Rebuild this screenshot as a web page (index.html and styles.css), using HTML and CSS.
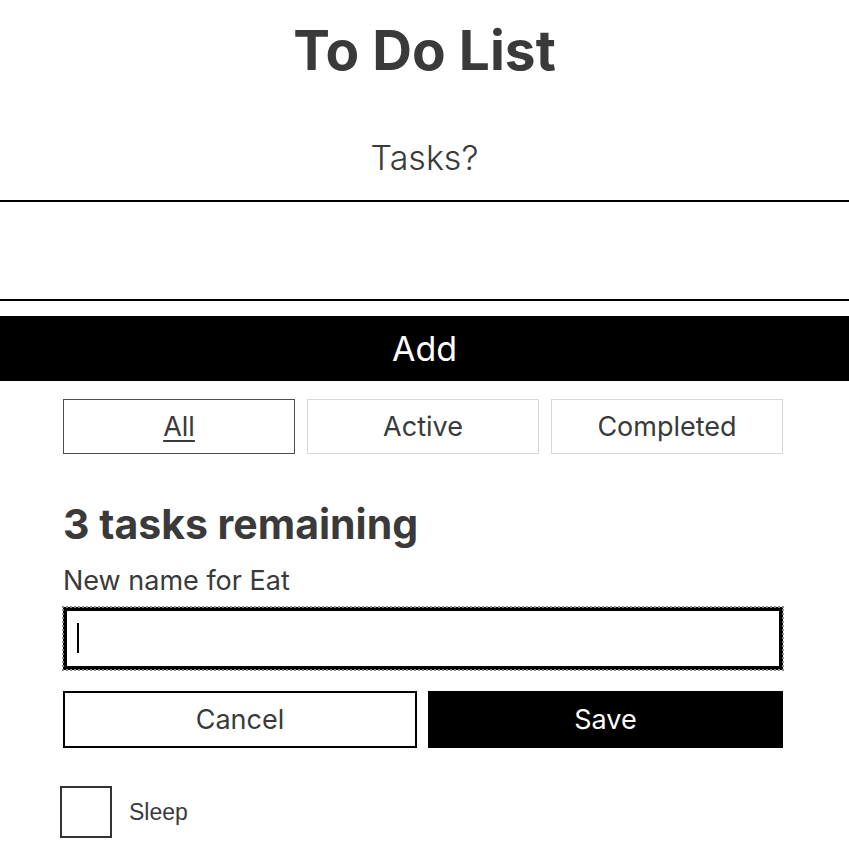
FILE: index.html
```html
<!DOCTYPE html>
<html lang="en">
<head>
<meta charset="utf-8">
<title>To Do List</title>
<link rel="stylesheet" href="styles.css">
</head>
<body>
<div class="todoapp">
  <h1 class="title">To Do List</h1>
  <form class="add-form">
    <label class="add-label" for="new-todo">Tasks?</label>
    <input class="add-input" id="new-todo" type="text">
    <button class="add-btn" type="button">Add</button>
  </form>
  <div class="content">
    <div class="filters">
      <button class="filter filter--active" type="button"><span class="filter-text">All</span></button>
      <button class="filter" type="button">Active</button>
      <button class="filter" type="button">Completed</button>
    </div>
    <h2 class="remaining">3 tasks remaining</h2>
    <form class="edit-form">
      <label class="edit-label" for="edit-eat">New name for Eat</label>
      <div class="edit-input"><span class="caret"></span></div>
      <div class="edit-actions">
        <button class="btn btn--cancel" type="button">Cancel</button>
        <button class="btn btn--save" type="button">Save</button>
      </div>
    </form>
    <ul class="todo-list">
      <li class="todo">
        <span class="checkbox"></span>
        <span class="todo-name">Sleep</span>
      </li>
    </ul>
  </div>
</div>
</body>
</html>
```
FILE: styles.css
```css
html, body {
  margin: 0;
  padding: 0;
  background: #fff;
}
body {
  font-family: Inter, "Liberation Sans", Arial, sans-serif;
  color: #3a3a3a;
}
.todoapp {
  display: flex;
  flex-direction: column;
}
.title {
  margin: 0;
  padding-top: 18px;
  font-size: 55px;
  line-height: 64px;
  font-weight: 700;
  text-align: center;
  color: #3a3a3a;
}
.add-form {
  display: flex;
  flex-direction: column;
}
.add-label {
  display: block;
  margin-top: 55px;
  font-size: 34px;
  font-weight: 300;
  line-height: 42px;
  text-align: center;
  color: #3a3a3a;
}
.add-input {
  display: block;
  box-sizing: border-box;
  width: 100%;
  height: 101px;
  margin: 21px 0 0;
  padding: 0;
  border: none;
  border-top: 2px solid #000;
  border-bottom: 2px solid #000;
  background: #fff;
  outline: none;
}
.add-btn {
  display: block;
  width: 100%;
  height: 65px;
  margin-top: 15px;
  padding: 0;
  border: none;
  background: #000;
  color: #fff;
  font-family: Inter, sans-serif;
  font-size: 34px;
  line-height: 1;
}
.content {
  width: 720px;
  margin: 0 0 0 63px;
  display: flex;
  flex-direction: column;
}
.filters {
  display: grid;
  grid-template-columns: repeat(3, 1fr);
  column-gap: 12px;
  margin-top: 18px;
}
.filter {
  box-sizing: border-box;
  height: 55px;
  padding: 0;
  border: 1px solid #d8d8d8;
  background: #fff;
  color: #3a3a3a;
  font-family: Inter, sans-serif;
  font-size: 27px;
  line-height: 1;
}
.filter--active {
  border-color: #4d4d4d;
}
.filter-text {
  text-decoration: underline;
  text-decoration-thickness: 2px;
  text-underline-offset: 4px;
}
.remaining {
  margin: 46px 0 0;
  font-size: 41px;
  line-height: 48px;
  font-weight: 700;
  color: #3a3a3a;
}
.edit-form {
  display: flex;
  flex-direction: column;
}
.edit-label {
  margin-top: 17px;
  font-size: 27px;
  line-height: 31px;
  color: #3a3a3a;
}
.edit-input {
  box-sizing: border-box;
  height: 63px;
  margin-top: 11px;
  border: 4px solid #000;
  outline: 2px dotted #8a8a8a;
  outline-offset: -1px;
  position: relative;
  background: #fff;
}
.caret {
  position: absolute;
  left: 10px;
  top: 12px;
  width: 2px;
  height: 30px;
  background: #000;
}
.edit-actions {
  display: grid;
  grid-template-columns: 354px 355px;
  column-gap: 11px;
  margin-top: 21px;
}
.btn {
  box-sizing: border-box;
  height: 57px;
  padding: 0;
  font-family: Inter, sans-serif;
  font-size: 27px;
  line-height: 1;
}
.btn--cancel {
  border: 2px solid #000;
  background: #fff;
  color: #3a3a3a;
}
.btn--save {
  border: none;
  background: #000;
  color: #fff;
}
.todo-list {
  list-style: none;
  margin: 38px 0 0 -3px;
  padding: 0;
}
.todo {
  display: flex;
  align-items: center;
  gap: 17px;
}
.checkbox {
  box-sizing: border-box;
  width: 52px;
  height: 52px;
  border: 2px solid #333;
  background: #fff;
}
.todo-name {
  font-family: "Liberation Sans", Arial, sans-serif;
  font-size: 23px;
  color: #3a3a3a;
}
```
